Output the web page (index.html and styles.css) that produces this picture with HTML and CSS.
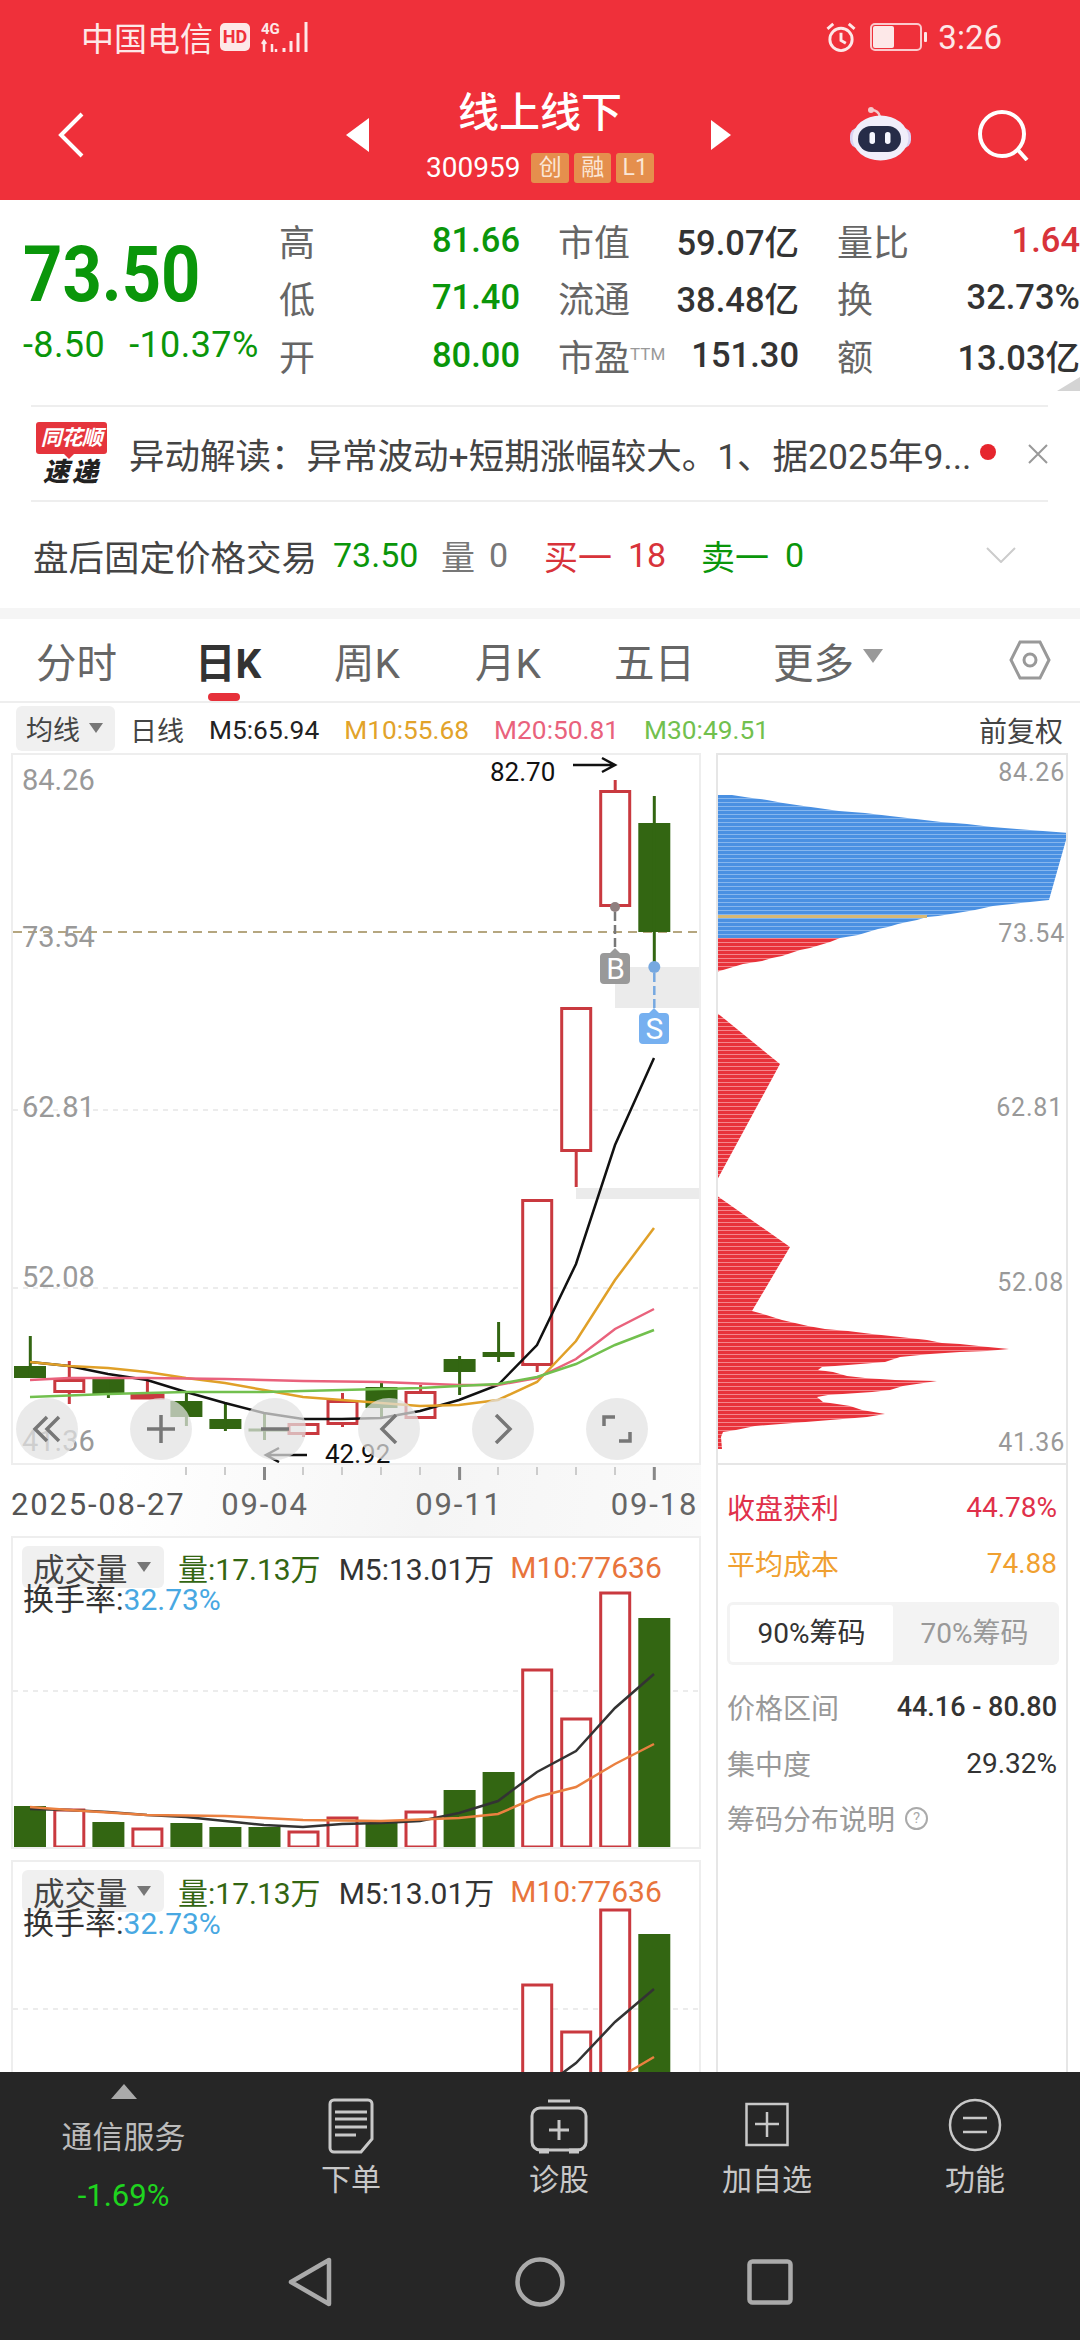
FILE: index.html
```html
<!DOCTYPE html>
<html lang="zh-CN">

<head>
  <meta charset="UTF-8">
  <meta name="viewport" content="width=device-width, initial-scale=1.0">
  <title>线上线下 300959</title>
  <link rel="stylesheet" href="styles.css">
</head>

<body>
  <div class="page">

    <header class="head">
      <div class="status">
        <span class="carrier">中国电信</span>
        <span class="hd">HD</span>
        <svg class="signal" viewBox="0 0 50 32" width="50" height="32">
          <text class="signal-text" x="0" y="13">4G</text>
          <path class="signal-arrows" d="M3 20V31M1 23l2-3 2 3M11 31V23M15 28v3"/>
          <path class="signal-bars" d="M23 31v-4M30 31V20M37 31V12M45 31V1"/>
        </svg>
        <svg class="alarm" viewBox="0 0 32 32" width="32" height="31">
          <circle cx="16" cy="18" r="11.5"/>
          <path d="M16 11v8l5 3M2 7l6-5M30 7l-6-5"/>
        </svg>
        <svg class="battery" viewBox="0 0 58 28" width="58" height="28">
          <rect class="battery-shell" x="1" y="1" width="50" height="26" rx="4"/>
          <rect class="battery-level" x="3" y="3" width="21" height="22" rx="2"/>
          <rect class="battery-level" x="54" y="9" width="3" height="10" rx="1"/>
        </svg>
        <span class="clock">3:26</span>
      </div>

      <nav class="navbar">
        <svg class="nav-back" viewBox="0 0 26 46" width="26" height="46"><path d="M24 2 3 23l21 21"/></svg>
        <span class="tri tri-left"></span>
        <div class="stock">
          <div class="stock-name">线上线下</div>
          <div class="stock-code">
            <span>300959</span>
            <i class="tag">创</i><i class="tag">融</i><i class="tag">L1</i>
          </div>
        </div>
        <span class="tri tri-right"></span>
        <svg class="robot" viewBox="0 0 62 56" width="62" height="56">
          <circle class="robot-ball" cx="21" cy="3" r="3"/>
          <path class="robot-antenna" d="M21 3c5 0 8 2 9 7"/>
          <rect class="robot-ear" x="0" y="21" width="61" height="20" rx="8"/>
          <ellipse class="robot-head" cx="30.500" cy="31" rx="28" ry="22.500"/>
          <rect class="robot-face" x="8" y="19" width="43" height="26" rx="13"/>
          <rect class="robot-eye" x="19.500" y="25" width="5.500" height="12" rx="2.700"/>
          <rect class="robot-eye" x="35" y="25" width="5.500" height="12" rx="2.700"/>
        </svg>
        <svg class="search" viewBox="0 0 52 52" width="52" height="52"><circle cx="25" cy="25" r="22"/><path d="M41 41l9 10"/></svg>
      </nav>
    </header>

    <section class="quote">
      <div class="price">
        <div class="price-now">73.50</div>
        <div class="price-change"><span>-8.50</span><span>-10.37%</span></div>
      </div>
      <div class="quote-grid">
        <div class="cell"><span class="key">高</span><b class="green">81.66</b></div>
        <div class="cell"><span class="key">市值</span><b>59.07亿</b></div>
        <div class="cell"><span class="key">量比</span><b class="red">1.64</b></div>
        <div class="cell"><span class="key">低</span><b class="green">71.40</b></div>
        <div class="cell"><span class="key">流通</span><b>38.48亿</b></div>
        <div class="cell"><span class="key">换</span><b>32.73%</b></div>
        <div class="cell"><span class="key">开</span><b class="green">80.00</b></div>
        <div class="cell"><span class="key">市盈<sup>TTM</sup></span><b>151.30</b></div>
        <div class="cell"><span class="key">额</span><b>13.03亿</b></div>
      </div>
      <span class="corner"></span>
    </section>

    <section class="news">
      <div class="logo">
        <div class="logo-top">同花顺</div>
        <div class="logo-bottom">速递</div>
      </div>
      <div class="news-text">异动解读：异常波动+短期涨幅较大。1、据2025年9...</div>
      <span class="news-dot"></span>
      <svg class="news-close" viewBox="0 0 20 20" width="20" height="20"><path d="M1 1l18 18M19 1 1 19"/></svg>
    </section>

    <section class="after">
      <span class="after-title">盘后固定价格交易</span>
      <span class="green after-price">73.50</span>
      <span class="after-key">量</span><span class="after-zero">0</span>
      <span class="red after-buy">买一</span><span class="red after-num">18</span>
      <span class="green after-sell">卖一</span><span class="green after-zero">0</span>
      <svg class="after-more" viewBox="0 0 30 16" width="30" height="16"><path d="M1 1l14 14L29 1"/></svg>
    </section>

    <div class="band"></div>

    <section class="tabs">
      <span class="tab">分时</span>
      <span class="tab active">日K</span>
      <span class="tab">周K</span>
      <span class="tab">月K</span>
      <span class="tab">五日</span>
      <span class="tab">更多<i class="tab-caret"></i></span>
      <svg class="tab-gear" viewBox="0 0 42 40" width="42" height="40">
        <path d="M11 2h20l9 18-9 18H11L2 20Z"/>
        <circle cx="21" cy="20" r="6"/>
      </svg>
    </section>

    <section class="ma">
      <span class="ma-btn">均线<i class="caret"></i></span>
      <span class="ma-day">日线</span>
      <span class="m5">M5:65.94</span>
      <span class="m10">M10:55.68</span>
      <span class="m20">M20:50.81</span>
      <span class="m30">M30:49.51</span>
      <span class="ma-adjust">前复权</span>
    </section>

    <main class="charts">
      <div class="col-left">

        <div class="kline">
          <svg class="kline-svg" viewBox="13 755 686 708">
            <path class="grid-dot" d="M13 1110H699M13 1288H699"/>
            <rect class="gap" x="615" y="967" width="84" height="41"/>
            <rect class="gap" x="576" y="1188" width="123" height="11"/>
            <path class="grid-last" d="M13 932H699"/>

            <g class="down">
              <rect x="14" y="1366" width="32" height="12"/><path d="M30.3 1336V1378"/>
              <rect x="92.4" y="1379" width="32" height="15"/><path d="M108.4 1379V1398"/>
              <rect x="170.4" y="1401" width="32" height="16"/><path d="M186.4 1393V1426"/>
              <rect x="209.4" y="1419" width="32" height="10"/><path d="M225.4 1403V1431"/>
              <path d="M248.5 1430H288M264.5 1412V1440"/>
              <rect x="365.5" y="1387" width="32" height="21"/><path d="M381.5 1383V1417"/>
              <rect x="443.6" y="1359" width="32" height="13"/><path d="M459.6 1356V1395"/>
              <rect x="482.6" y="1352" width="32" height="5"/><path d="M498.6 1322V1362"/>
              <rect x="638.3" y="823" width="32" height="109"/><path d="M654.3 796V967"/>
            </g>

            <g class="up">
              <rect x="54.8" y="1380.5" width="29" height="11"/><path d="M69.3 1361V1380M69.3 1392V1404"/>
              <rect x="132" y="1395" width="31" height="3"/><path d="M147.4 1380V1395"/>
              <rect x="289" y="1424.5" width="29" height="9"/><path d="M303.5 1434V1437"/>
              <rect x="328" y="1401.5" width="29" height="22"/><path d="M342.5 1393V1401M342.5 1424V1427"/>
              <rect x="406" y="1392.5" width="29" height="25"/><path d="M420.6 1385V1392"/>
              <rect x="522.7" y="1200.5" width="29" height="164"/><path d="M537.2 1365V1372"/>
              <rect x="561.7" y="1008.5" width="29" height="142"/><path d="M576.2 1151V1187"/>
              <rect x="600.7" y="791.5" width="29" height="114"/><path d="M615.2 780V790"/>
            </g>

            <polyline class="line-m5" points="30,1362 69,1366 108,1374 147,1380 186,1392 225,1403 264,1413 303,1419 342,1419 381,1418 420,1411 459,1400 498,1385 537,1345 576,1264 615,1145 654,1058"/>
            <polyline class="line-m10" points="30,1362 69,1366 108,1368 147,1372 186,1378 225,1383 264,1390 303,1397 342,1400 381,1403 420,1406 459,1405 498,1400 537,1382 576,1341 615,1280 654,1228"/>
            <polyline class="line-m20" points="30,1380 69,1378 147,1378 225,1379 303,1381 381,1382 459,1385 498,1385 537,1378 576,1359 615,1329 654,1309"/>
            <polyline class="line-m30" points="30,1397 108,1394 186,1392 264,1392 342,1390 420,1388 498,1384 537,1377 576,1364 615,1345 654,1330"/>

            <g class="sign-b">
              <circle cx="615" cy="907" r="5"/>
              <path class="sign-link" d="M615 912V950"/>
              <path d="M600 957q0-4 4-4h6l5-5 5 5h6q4 0 4 4v23q0 4-4 4h-22q-4 0-4-4Z"/>
              <text class="sign-text" x="615.5" y="979">B</text>
            </g>
            <g class="sign-s">
              <circle cx="654.3" cy="967" r="6"/>
              <path class="sign-link" d="M654.3 973V1009"/>
              <path d="M639 1017q0-4 4-4h6l5-5 5 5h6q4 0 4 4v23q0 4-4 4h-22q-4 0-4-4Z"/>
              <text class="sign-text" x="654.5" y="1039">S</text>
            </g>

            <text class="y-label" x="22" y="790">84.26</text>
            <text class="y-label" x="22" y="947">73.54</text>
            <text class="y-label" x="22" y="1117">62.81</text>
            <text class="y-label" x="22" y="1287">52.08</text>
            <text class="y-label" x="22" y="1451">41.36</text>

            <text class="mark" x="490" y="781">82.70</text>
            <path class="mark-arrow" d="M573 765H615M602 758l13 7-13 7"/>
            <text class="mark" x="325" y="1462.500">42.92</text>
            <path class="mark-arrow" d="M307 1455H266M279 1448l-13 7 13 7"/>
          </svg>

          <div class="chart-tools">
            <button class="tool">
              <svg viewBox="0 0 30 30" width="30" height="30"><path d="M15 3 3 15l12 12M27 3 15 15l12 12"/></svg>
            </button>
            <button class="tool">
              <svg viewBox="0 0 30 30" width="30" height="30"><path d="M15 1V29M1 15H29"/></svg>
            </button>
            <button class="tool">
              <svg viewBox="0 0 30 30" width="30" height="30"><path d="M1 15H29"/></svg>
            </button>
            <button class="tool">
              <svg viewBox="0 0 30 30" width="30" height="30"><path d="M22 1 8 15l14 14"/></svg>
            </button>
            <button class="tool">
              <svg viewBox="0 0 30 30" width="30" height="30"><path d="M8 1l14 14L8 29"/></svg>
            </button>
            <button class="tool">
              <svg viewBox="0 0 30 30" width="30" height="30"><path d="M2 12V3H13M28 18V27H17"/></svg>
            </button>
          </div>
        </div>

        <svg class="axis" viewBox="11 1465 690 71">
          <path class="tick" d="M186 1467V1475M225 1467V1475M303 1467V1475M342 1467V1475M381 1467V1475M420 1467V1475M498 1467V1475M537 1467V1475M576 1467V1475M615 1467V1475"/>
          <path class="tick-major" d="M264.5 1467V1480M459.6 1467V1480M654.3 1467V1480"/>
          <text class="axis-first" x="11" y="1515">2025-08-27</text>
          <text class="axis-date" x="265" y="1515">09-04</text>
          <text class="axis-date" x="459" y="1515">09-11</text>
          <text class="axis-date" x="654.5" y="1515">09-18</text>
        </svg>

        <div class="volume">
          <svg class="volume-svg" viewBox="13 1538 686 309">
            <path class="grid-dot" d="M13 1691H699"/>
            <g class="down">
              <rect x="14" y="1806" width="32" height="42"/>
              <rect x="92.4" y="1822" width="32" height="26"/>
              <rect x="170.4" y="1823" width="32" height="25"/>
              <rect x="209.4" y="1827" width="32" height="21"/>
              <rect x="248.5" y="1827" width="32" height="21"/>
              <rect x="365.5" y="1823" width="32" height="25"/>
              <rect x="443.6" y="1790" width="32" height="58"/>
              <rect x="482.6" y="1772" width="32" height="76"/>
              <rect x="638.3" y="1618" width="32" height="230"/>
            </g>
            <g class="up">
              <rect x="54.8" y="1810" width="29" height="37"/>
              <rect x="132.9" y="1829" width="29" height="18"/>
              <rect x="289" y="1832" width="29" height="15"/>
              <rect x="328" y="1818" width="29" height="29"/>
              <rect x="406" y="1812" width="29" height="35"/>
              <rect x="522.7" y="1670" width="29" height="177"/>
              <rect x="561.7" y="1719" width="29" height="128"/>
              <rect x="600.7" y="1593" width="29" height="254"/>
            </g>
            <polyline class="vol-m5" points="30,1809 69,1810 108,1812 147,1815 186,1817 225,1821 264,1825 303,1827 342,1824 381,1823 420,1821 459,1813 498,1801 537,1772 576,1751 615,1708 654,1674"/>
            <polyline class="vol-m10" points="30,1807 69,1810 147,1815 225,1816 303,1820 381,1821 459,1818 498,1814 537,1797 576,1787 615,1764 654,1744"/>
          </svg>
          <div class="vol-head">
            <div class="vol-row">
              <span class="vol-btn">成交量<i class="caret"></i></span>
              <span class="vol-now">量:17.13万</span>
              <span class="vol-five">M5:13.01万</span>
              <span class="vol-ten">M10:77636</span>
            </div>
            <div class="vol-turn">换手率:<span>32.73%</span></div>
          </div>
        </div>

        <div class="volume volume-second">
          <svg class="volume-svg" viewBox="13 1862 686 309">
            <path class="grid-dot" d="M13 2009H699"/>
            <g class="down">
              <rect x="638.3" y="1934" width="32" height="237"/>
            </g>
            <g class="up">
              <rect x="522.7" y="1985" width="29" height="186"/>
              <rect x="561.7" y="2032" width="29" height="139"/>
              <rect x="600.7" y="1910" width="29" height="261"/>
            </g>
            <polyline class="vol-m5" points="537,2092 576,2063 615,2022 654,1989"/>
            <polyline class="vol-m10" points="576,2112 615,2080 654,2057"/>
          </svg>
          <div class="vol-head">
            <div class="vol-row">
              <span class="vol-btn">成交量<i class="caret"></i></span>
              <span class="vol-now">量:17.13万</span>
              <span class="vol-five">M5:13.01万</span>
              <span class="vol-ten">M10:77636</span>
            </div>
            <div class="vol-turn">换手率:<span>32.73%</span></div>
          </div>
        </div>
      </div>

      <aside class="col-right">
        <svg class="chips" viewBox="718 756 348 708">
          <defs>
            <pattern id="stripeBlue" width="4" height="4" patternUnits="userSpaceOnUse">
              <rect class="stripe-blue" width="4" height="3"/>
              <rect class="stripe-blue-lite" y="3" width="4" height="1"/>
            </pattern>
            <pattern id="stripeRed" width="4" height="4" patternUnits="userSpaceOnUse">
              <rect class="stripe-red" width="4" height="3"/>
              <rect class="stripe-red-lite" y="3" width="4" height="1"/>
            </pattern>
          </defs>
          <polygon class="chips-blue" points="716,796 732,796 748,798.5 767,801 783,804 800,806.5 818,809 839,812 865,814 890,817 916,820 941,823 967,825 992,828 1017,830 1043,832 1068,834 1049,901 1030,903 1012,905 993,907 975,911 957,914 938,917 927,918 917,921 907,923 898,925 888,928 878,930 868,933 858,936 840,939 716,939"/>
          <rect class="chips-cost" x="716" y="916" width="211" height="3"/>
          <polygon class="chips-red" points="716,939 840,939 830,943 820,946 810,949 800,951 791,954 782,957 772,959 762,962 743,965 733,968 723,971 716,973"/>
          <polygon class="chips-red" points="716,1013 780,1065 716,1183"/>
          <polygon class="chips-red" points="716,1196 790,1248 752,1312 763,1315 782,1321 808,1327 825,1330 848,1332 872,1335 900,1338 927,1341 942,1344 960,1345 988,1348 1009,1350 987,1352 960,1353 930,1355 900,1358 885,1363 848,1366 822,1368 818,1371 833,1373 847,1377 865,1379 895,1381 937,1382 903,1387 890,1391 872,1393 828,1396 817,1398 823,1403 837,1405 850,1407 862,1411 885,1415 867,1418 818,1422 793,1424 755,1427 736,1431 723,1433 721,1438 722,1450 716,1450"/>
          <text class="chips-label" x="1065" y="782">84.26</text>
          <text class="chips-label" x="1065" y="943">73.54</text>
          <text class="chips-label" x="1063" y="1117">62.81</text>
          <text class="chips-label" x="1064" y="1292">52.08</text>
          <text class="chips-label" x="1065" y="1452">41.36</text>
        </svg>

        <div class="stats">
          <div class="stat stat-profit"><span>收盘获利</span><span>44.78%</span></div>
          <div class="stat stat-cost"><span>平均成本</span><span>74.88</span></div>
          <div class="segment">
            <span class="seg seg-on">90%筹码</span>
            <span class="seg">70%筹码</span>
          </div>
          <div class="stat stat-plain"><span>价格区间</span><b>44.16 - 80.80</b></div>
          <div class="stat stat-plain"><span>集中度</span><em>29.32%</em></div>
          <div class="stat-help">筹码分布说明<i class="help">?</i></div>
        </div>
      </aside>
    </main>

    <footer class="dock">
      <div class="dock-tools">
        <div class="dock-index">
          <span class="dock-up"></span>
          <span class="dock-name">通信服务</span>
          <span class="dock-pct">-1.69%</span>
        </div>
        <div class="dock-item">
          <svg viewBox="0 0 50 56" width="50" height="56">
            <path d="M8 2H42a4 4 0 0 1 4 4V41L35 54H8a4 4 0 0 1-4-4V6a4 4 0 0 1 4-4Z"/>
            <path d="M9 14H41M9 21H41M9 29H41M9 37H30"/>
          </svg>
          <span>下单</span>
        </div>
        <div class="dock-item">
          <svg viewBox="0 0 58 56" width="58" height="56">
            <path d="M18 3H40"/>
            <rect x="2" y="10" width="54" height="42" rx="8"/>
            <path d="M29 22V42M19 32H39"/>
            <path class="dock-feet" d="M9 53H19M39 53H49"/>
          </svg>
          <span>诊股</span>
        </div>
        <div class="dock-item">
          <svg class="dock-thin" viewBox="0 0 44 56" width="44" height="56">
            <rect x="1.500" y="6" width="41" height="41"/>
            <path d="M22 14V39M10 26H34"/>
          </svg>
          <span>加自选</span>
        </div>
        <div class="dock-item">
          <svg class="dock-thin" viewBox="0 0 54 56" width="54" height="56">
            <circle cx="27" cy="27" r="25"/>
            <path d="M15 20H39M15 34H39"/>
          </svg>
          <span>功能</span>
        </div>
      </div>

      <div class="sysnav">
        <div class="sysnav-cell">
          <svg viewBox="0 0 44 50" width="44" height="50"><path d="M41 3V47L3 25Z"/></svg>
        </div>
        <div class="sysnav-cell">
          <svg viewBox="0 0 50 50" width="50" height="50"><circle cx="25" cy="25" r="22.500"/></svg>
        </div>
        <div class="sysnav-cell">
          <svg viewBox="0 0 46 46" width="46" height="46"><rect x="2.500" y="2.500" width="41" height="41" rx="3"/></svg>
        </div>
      </div>
    </footer>

  </div>
</body>

</html>
```

FILE: styles.css
```css
:root {
  --red: #ef303a;
  --up: #c9393f;
  --down: #336612;
  --green: #0a960a;
}

* {
  box-sizing: border-box;
}

body {
  margin: 0;
  background: #fff;
  font-family: Roboto, "Noto Sans CJK SC", sans-serif;
  color: #333;
}

i, em {
  font-style: normal;
}

b {
  font-weight: 500;
}

svg {
  display: block;
}

.page {
  position: relative;
  width: 1080px;
  height: 2340px;
  overflow: hidden;
}

.green { color: var(--green); }
.red { color: #d8333a; }

/* red header */
.head {
  height: 200px;
  background: var(--red);
  color: #fff;
}

.status {
  display: flex;
  align-items: center;
  height: 74px;
  padding: 0 78px 0 81px;
}

.carrier {
  font-size: 33px;
  color: #fde8e8;
}

.hd {
  margin-left: 7px;
  width: 30px;
  height: 28px;
  border-radius: 5px;
  background: #fde8e8;
  color: var(--red);
  font-size: 18px;
  font-weight: 700;
  line-height: 28px;
  text-align: center;
}

.signal {
  margin-left: 11px;
}

.signal-text {
  fill: #fde8e8;
  font-size: 15px;
  font-weight: 700;
}

.signal-arrows, .signal-bars {
  fill: none;
  stroke: #fde8e8;
  stroke-width: 2.500;
}

.signal-bars {
  stroke-width: 3;
}

.alarm {
  margin-left: auto;
  fill: none;
  stroke: #fde8e8;
  stroke-width: 3;
}

.battery {
  margin-left: 13px;
}

.battery-shell {
  fill: none;
  stroke: #fbc9cc;
  stroke-width: 2;
}

.battery-level {
  fill: #fde8e8;
}

.clock {
  margin-left: 10px;
  font-size: 33px;
  color: #fde8e8;
}

.navbar {
  display: flex;
  align-items: center;
  height: 122px;
  padding-left: 58px;
}

.nav-back {
  margin-right: 262px;
  fill: none;
  stroke: #fff;
  stroke-width: 4;
}

.tri {
  width: 0;
  height: 0;
  border-style: solid;
  border-color: transparent;
}

.tri-left {
  margin-right: 57px;
  border-width: 17px 23px 17px 0;
  border-right-color: #fff;
}

.tri-right {
  margin-left: 57px;
  border-width: 15px 0 15px 20px;
  border-left-color: #fff;
}

.stock {
  align-self: flex-start;
  width: 228px;
  margin-top: 15px;
  text-align: center;
}

.stock-name {
  font-size: 41px;
  font-weight: 500;
  line-height: 48px;
}

.stock-code {
  display: flex;
  align-items: center;
  gap: 5px;
  margin-top: 16px;
  font-size: 28px;
  line-height: 30px;
  color: #fff;
}

.stock-code span {
  margin-right: 6px;
}

.tag {
  width: 38px;
  height: 30px;
  border-radius: 3px;
  background: #e58f4d;
  font-size: 23px;
  line-height: 30px;
  text-align: center;
  color: #fbe6d6;
}

.robot {
  margin-left: 119px;
}

.robot-ball { fill: #f4c9cc; }

.robot-antenna {
  fill: none;
  stroke: #f4c9cc;
  stroke-width: 2.500;
}

.robot-ear { fill: #d9d2f2; }
.robot-head { fill: #f0eefa; }
.robot-face { fill: #262c48; }
.robot-eye { fill: #f6f7ff; }

.search {
  margin-left: 65px;
  fill: none;
  stroke: #fff;
  stroke-width: 4;
}

/* quote block */
.quote {
  position: relative;
  display: flex;
  height: 205px;
  padding-left: 23px;
}

.price {
  width: 256px;
  padding-top: 30px;
  color: var(--green);
}

.price-now {
  width: 200px;
  font-size: 78px;
  font-weight: 700;
  line-height: 90px;
  transform: scaleX(.88);
  transform-origin: left;
}

.price-change {
  display: flex;
  gap: 24px;
  margin-top: 5px;
  font-size: 36px;
  line-height: 40px;
  letter-spacing: .4px;
  white-space: nowrap;
}

.quote-grid {
  display: grid;
  grid-template-columns: 241px 241px 243px;
  grid-auto-rows: 57.500px;
  column-gap: 38px;
  padding-top: 11px;
  font-size: 34px;
}

.cell {
  display: flex;
  justify-content: space-between;
  align-items: center;
}

.key {
  font-size: 36px;
  color: #666;
  white-space: nowrap;
}

.key sup {
  font-size: 17px;
  color: #999;
  vertical-align: 11px;
  line-height: 0;
}

.cell b {
  font-size: 34.500px;
  white-space: nowrap;
}

.corner {
  position: absolute;
  right: 0;
  top: 177px;
  border-style: solid;
  border-width: 0 0 14px 23px;
  border-color: transparent transparent #d4d4d4 transparent;
}

/* news + after hours rows */
.news {
  display: flex;
  align-items: center;
  width: 1017px;
  height: 95px;
  margin-left: 31px;
  border-top: 2px solid #eee;
}

.logo {
  width: 75px;
  margin-left: 2px;
}

.logo-top {
  position: relative;
  width: 71px;
  height: 32px;
  margin-left: 3px;
  border-radius: 3px;
  background: #e5343c;
  color: #fff;
  font-size: 21px;
  font-weight: 700;
  font-style: italic;
  line-height: 32px;
  text-align: center;
  letter-spacing: -.5px;
}

.logo-top::after {
  content: "";
  position: absolute;
  left: 28px;
  top: 32px;
  border-style: solid;
  border-width: 5px 5px 0;
  border-color: #e5343c transparent transparent;
}

.logo-bottom {
  margin: 5px 0 0 3px;
  font-size: 26px;
  font-weight: 900;
  font-style: italic;
  line-height: 26px;
  letter-spacing: 3px;
  text-align: center;
  color: #222;
}

.news-text {
  width: 850px;
  margin-left: 21px;
  font-size: 35.500px;
  color: #444;
  white-space: nowrap;
  text-spacing-trim: space-all;
}

.news-dot {
  width: 16px;
  height: 16px;
  margin: -4px 0 0 1px;
  border-radius: 50%;
  background: #e6252d;
}

.news-close {
  margin-left: 32px;
  fill: none;
  stroke: #999;
  stroke-width: 2;
}

.after {
  display: flex;
  align-items: center;
  width: 1017px;
  height: 108px;
  margin-left: 31px;
  padding-left: 2px;
  border-top: 2px solid #eee;
  font-size: 34px;
}

.after-title {
  width: 300px;
  font-size: 35.500px;
  white-space: nowrap;
  color: #444;
}

.after-price { width: 108px; }
.after-key { width: 48px; color: #777; }
.after-zero { width: 55px; color: #777; }
.after-buy { width: 84px; }
.after-num { width: 73px; }
.after-sell { width: 84px; }
.after .green.after-zero { color: var(--green); }

.after-more {
  margin-left: 146px;
  fill: none;
  stroke: #ccc;
  stroke-width: 2;
}

.band {
  height: 11px;
  background: #f5f5f5;
}

/* period tabs */
.tabs {
  display: grid;
  grid-template-columns: 159px 139px 141px 139px 159px 234px 42px;
  align-items: center;
  height: 84px;
  padding-left: 36px;
  border-bottom: 2px solid #eee;
  font-size: 40.500px;
  color: #666;
}

.tab {
  position: relative;
  display: flex;
  align-items: center;
  white-space: nowrap;
}

.tab.active {
  font-weight: 700;
  color: #333;
}

.tab.active::after {
  content: "";
  position: absolute;
  left: 13px;
  top: 62px;
  width: 32px;
  height: 8px;
  border-radius: 4px;
  background: #e6303a;
}

.tab-caret {
  margin: -8px 0 0 9px;
  border-style: solid;
  border-width: 14px 10px 0;
  border-color: #999 transparent transparent;
}

.tab-gear {
  margin-left: 2px;
  fill: none;
  stroke: #999;
  stroke-width: 3;
}

/* moving averages row */
.ma {
  display: flex;
  align-items: center;
  gap: 25px;
  height: 50px;
  padding: 3px 17px 0 16px;
  font-size: 26.300px;
  white-space: nowrap;
}

.ma-btn {
  display: flex;
  align-items: center;
  width: 99px;
  height: 45px;
  margin: -3px -10px 0 0;
  padding-left: 10px;
  border-radius: 6px;
  background: #f0f0f0;
  font-size: 27px;
  color: #444;
}

.caret {
  margin: 0 0 0 9px;
  border-style: solid;
  border-width: 10px 7.500px 0;
  border-color: #777 transparent transparent;
}

.ma-day { font-size: 27px; color: #444; }
.m5 { color: #222; }
.m10 { color: #e2a32a; }
.m20 { color: #e9627c; }
.m30 { color: #72c04e; }

.ma-adjust {
  margin-left: auto;
  font-size: 28px;
  color: #444;
}

/* chart columns */
.charts {
  display: grid;
  grid-template-columns: 690px 352px;
  column-gap: 15px;
  padding-left: 11px;
}

.kline {
  position: relative;
}

.kline-svg {
  width: 690px;
  height: 712px;
  border: 2px solid #eee;
  overflow: hidden;
}

.grid-dot {
  fill: none;
  stroke: #ececec;
  stroke-width: 2;
  stroke-dasharray: 5 5;
}

.grid-last {
  fill: none;
  stroke: #b5a67f;
  stroke-width: 2;
  stroke-dasharray: 9 6;
}

.gap { fill: #ebebeb; }

.down rect { fill: var(--down); }

.down path {
  fill: none;
  stroke: var(--down);
  stroke-width: 3;
}

.up rect {
  fill: #fff;
  stroke: var(--up);
  stroke-width: 3;
}

.up path {
  fill: none;
  stroke: var(--up);
  stroke-width: 3;
}

.line-m5, .line-m10, .line-m20, .line-m30, .vol-m5, .vol-m10 {
  fill: none;
  stroke-width: 2.500;
}

.line-m5 { stroke: #111; }
.line-m10 { stroke: #e0a028; }
.line-m20 { stroke: #e9627c; }
.line-m30 { stroke: #72c04e; }
.vol-m5 { stroke: #333; }
.vol-m10 { stroke: #ea8040; }

.sign-b path { fill: #999; }
.sign-b circle { fill: #8f7f7f; }
.sign-s path { fill: #76b0f0; }
.sign-s circle { fill: #76a8e0; }

.sign-b .sign-link {
  fill: none;
  stroke: #777;
  stroke-width: 2.500;
  stroke-dasharray: 9 4;
}

.sign-s .sign-link {
  fill: none;
  stroke: #76a8e0;
  stroke-width: 2.500;
  stroke-dasharray: 9 4;
}

.sign-text {
  fill: #fff;
  font-size: 30px;
  text-anchor: middle;
}

.y-label {
  fill: #999;
  font-size: 29px;
}

.mark {
  fill: #111;
  font-size: 26px;
}

.mark-arrow {
  fill: none;
  stroke: #111;
  stroke-width: 2.500;
}

.chart-tools {
  position: absolute;
  left: 5px;
  top: 645px;
  display: flex;
  gap: 52px;
}

.tool {
  display: flex;
  align-items: center;
  justify-content: center;
  width: 62px;
  height: 62px;
  padding: 0;
  border: 0;
  border-radius: 50%;
  background: rgba(226, 226, 226, .72);
}

.tool svg {
  fill: none;
  stroke: #777;
  stroke-width: 3.500;
}

.axis {
  width: 690px;
  height: 71px;
  background: linear-gradient(100deg, #fff 15%, #f5f5f5 60%, #fafafa);
}

.tick {
  fill: none;
  stroke: #ccc;
  stroke-width: 2;
}

.tick-major {
  fill: none;
  stroke: #888;
  stroke-width: 3;
}

.axis-first, .axis-date {
  font-size: 31px;
  letter-spacing: 1.800px;
}

.axis-first { fill: #555; }

.axis-date {
  fill: #666;
  text-anchor: middle;
}

.volume {
  position: relative;
}

.volume-second {
  margin-top: 11px;
}

.volume-svg {
  width: 690px;
  height: 313px;
  border: 2px solid #eee;
  overflow: hidden;
}

.vol-head {
  position: absolute;
  left: 11px;
  top: 10px;
  font-size: 30px;
  white-space: nowrap;
}

.vol-row {
  display: flex;
  align-items: center;
  height: 42px;
}

.vol-btn {
  display: flex;
  align-items: center;
  width: 142px;
  height: 42px;
  padding-left: 11px;
  border-radius: 6px;
  background: #f0f0f0;
  font-size: 31.500px;
  color: #444;
}

.vol-now { margin-left: 14px; color: var(--down); }
.vol-five { margin-left: 18px; color: #333; }
.vol-ten { margin-left: 16px; color: #e8743c; }

.vol-turn {
  margin: -5px 0 0 1px;
  font-size: 31px;
  line-height: 34px;
  color: #333;
}

.vol-turn span {
  font-size: 30px;
  color: #48a8e2;
}

/* chip distribution column */
.col-right {
  height: 1320px;
  border-left: 2px solid #e6e6e6;
  border-right: 2px solid #e6e6e6;
}

.chips {
  width: 348px;
  height: 712px;
  border-top: 2px solid #e6e6e6;
  border-bottom: 2px solid #e6e6e6;
}

.chips-blue { fill: url(#stripeBlue); }
.chips-red { fill: url(#stripeRed); }
.chips-cost { fill: #d8b874; }
.stripe-blue { fill: #4a90e2; }
.stripe-blue-lite { fill: #86b6ee; }
.stripe-red { fill: #e8323a; }
.stripe-red-lite { fill: #f4868c; }

.chips-label {
  fill: #999;
  font-size: 25px;
  letter-spacing: .8px;
  text-anchor: end;
}

.stats {
  padding: 14px 9px 0;
  font-size: 28px;
}

.stat {
  display: flex;
  justify-content: space-between;
  align-items: center;
  height: 56px;
  white-space: nowrap;
}

.stat-profit { color: #e0304a; }
.stat-cost { color: #f0a030; }

.segment {
  display: flex;
  width: 332px;
  height: 63px;
  margin: 11px 0 14px;
  padding: 3px;
  border-radius: 6px;
  background: #f3f3f3;
  text-align: center;
}

.seg {
  width: 163px;
  line-height: 57px;
  color: #999;
}

.seg-on {
  border-radius: 3px;
  background: #fff;
  color: #333;
}

.stat-plain {
  color: #999;
}

.stat-plain b {
  font-size: 27px;
  color: #333;
}

.stat-plain em {
  color: #333;
}

.stat-help {
  display: flex;
  align-items: center;
  height: 54px;
  color: #999;
}

.help {
  width: 23px;
  height: 23px;
  margin-left: 10px;
  border: 2px solid #aaa;
  border-radius: 50%;
  font-size: 15px;
  line-height: 19px;
  text-align: center;
  color: #aaa;
}

/* bottom dock, sits over the panes */
.dock {
  position: absolute;
  left: 0;
  bottom: 0;
  width: 1080px;
  height: 268px;
  background: #262626;
  color: #c8c8c8;
}

.dock-tools {
  display: grid;
  grid-template-columns: 247px repeat(4, 208px);
  height: 168px;
}

.dock-index {
  display: flex;
  flex-direction: column;
  align-items: center;
  padding-top: 12px;
}

.dock-up {
  border-style: solid;
  border-width: 0 13px 15px;
  border-color: transparent transparent #aaa;
}

.dock-name {
  margin-top: 16px;
  font-size: 31px;
  line-height: 46px;
  color: #bbb;
}

.dock-pct {
  margin-top: 15px;
  font-size: 31px;
  line-height: 40px;
  color: #1fd41f;
}

.dock-item {
  display: flex;
  flex-direction: column;
  align-items: center;
  padding-top: 26px;
  font-size: 30px;
}

.dock-item span {
  margin-top: 9px;
  line-height: 34px;
}

.dock-item svg {
  fill: none;
  stroke: #c8c8c8;
  stroke-width: 3;
}

.dock-item .dock-thin {
  stroke-width: 2.500;
}

.dock-item .dock-feet {
  stroke-width: 5;
}

.sysnav {
  display: flex;
  justify-content: center;
}

.sysnav-cell {
  display: flex;
  justify-content: center;
  align-items: center;
  width: 230px;
  height: 84px;
}

.sysnav-cell svg {
  fill: none;
  stroke: #aaa;
  stroke-width: 4.500;
  stroke-linejoin: round;
}
```
